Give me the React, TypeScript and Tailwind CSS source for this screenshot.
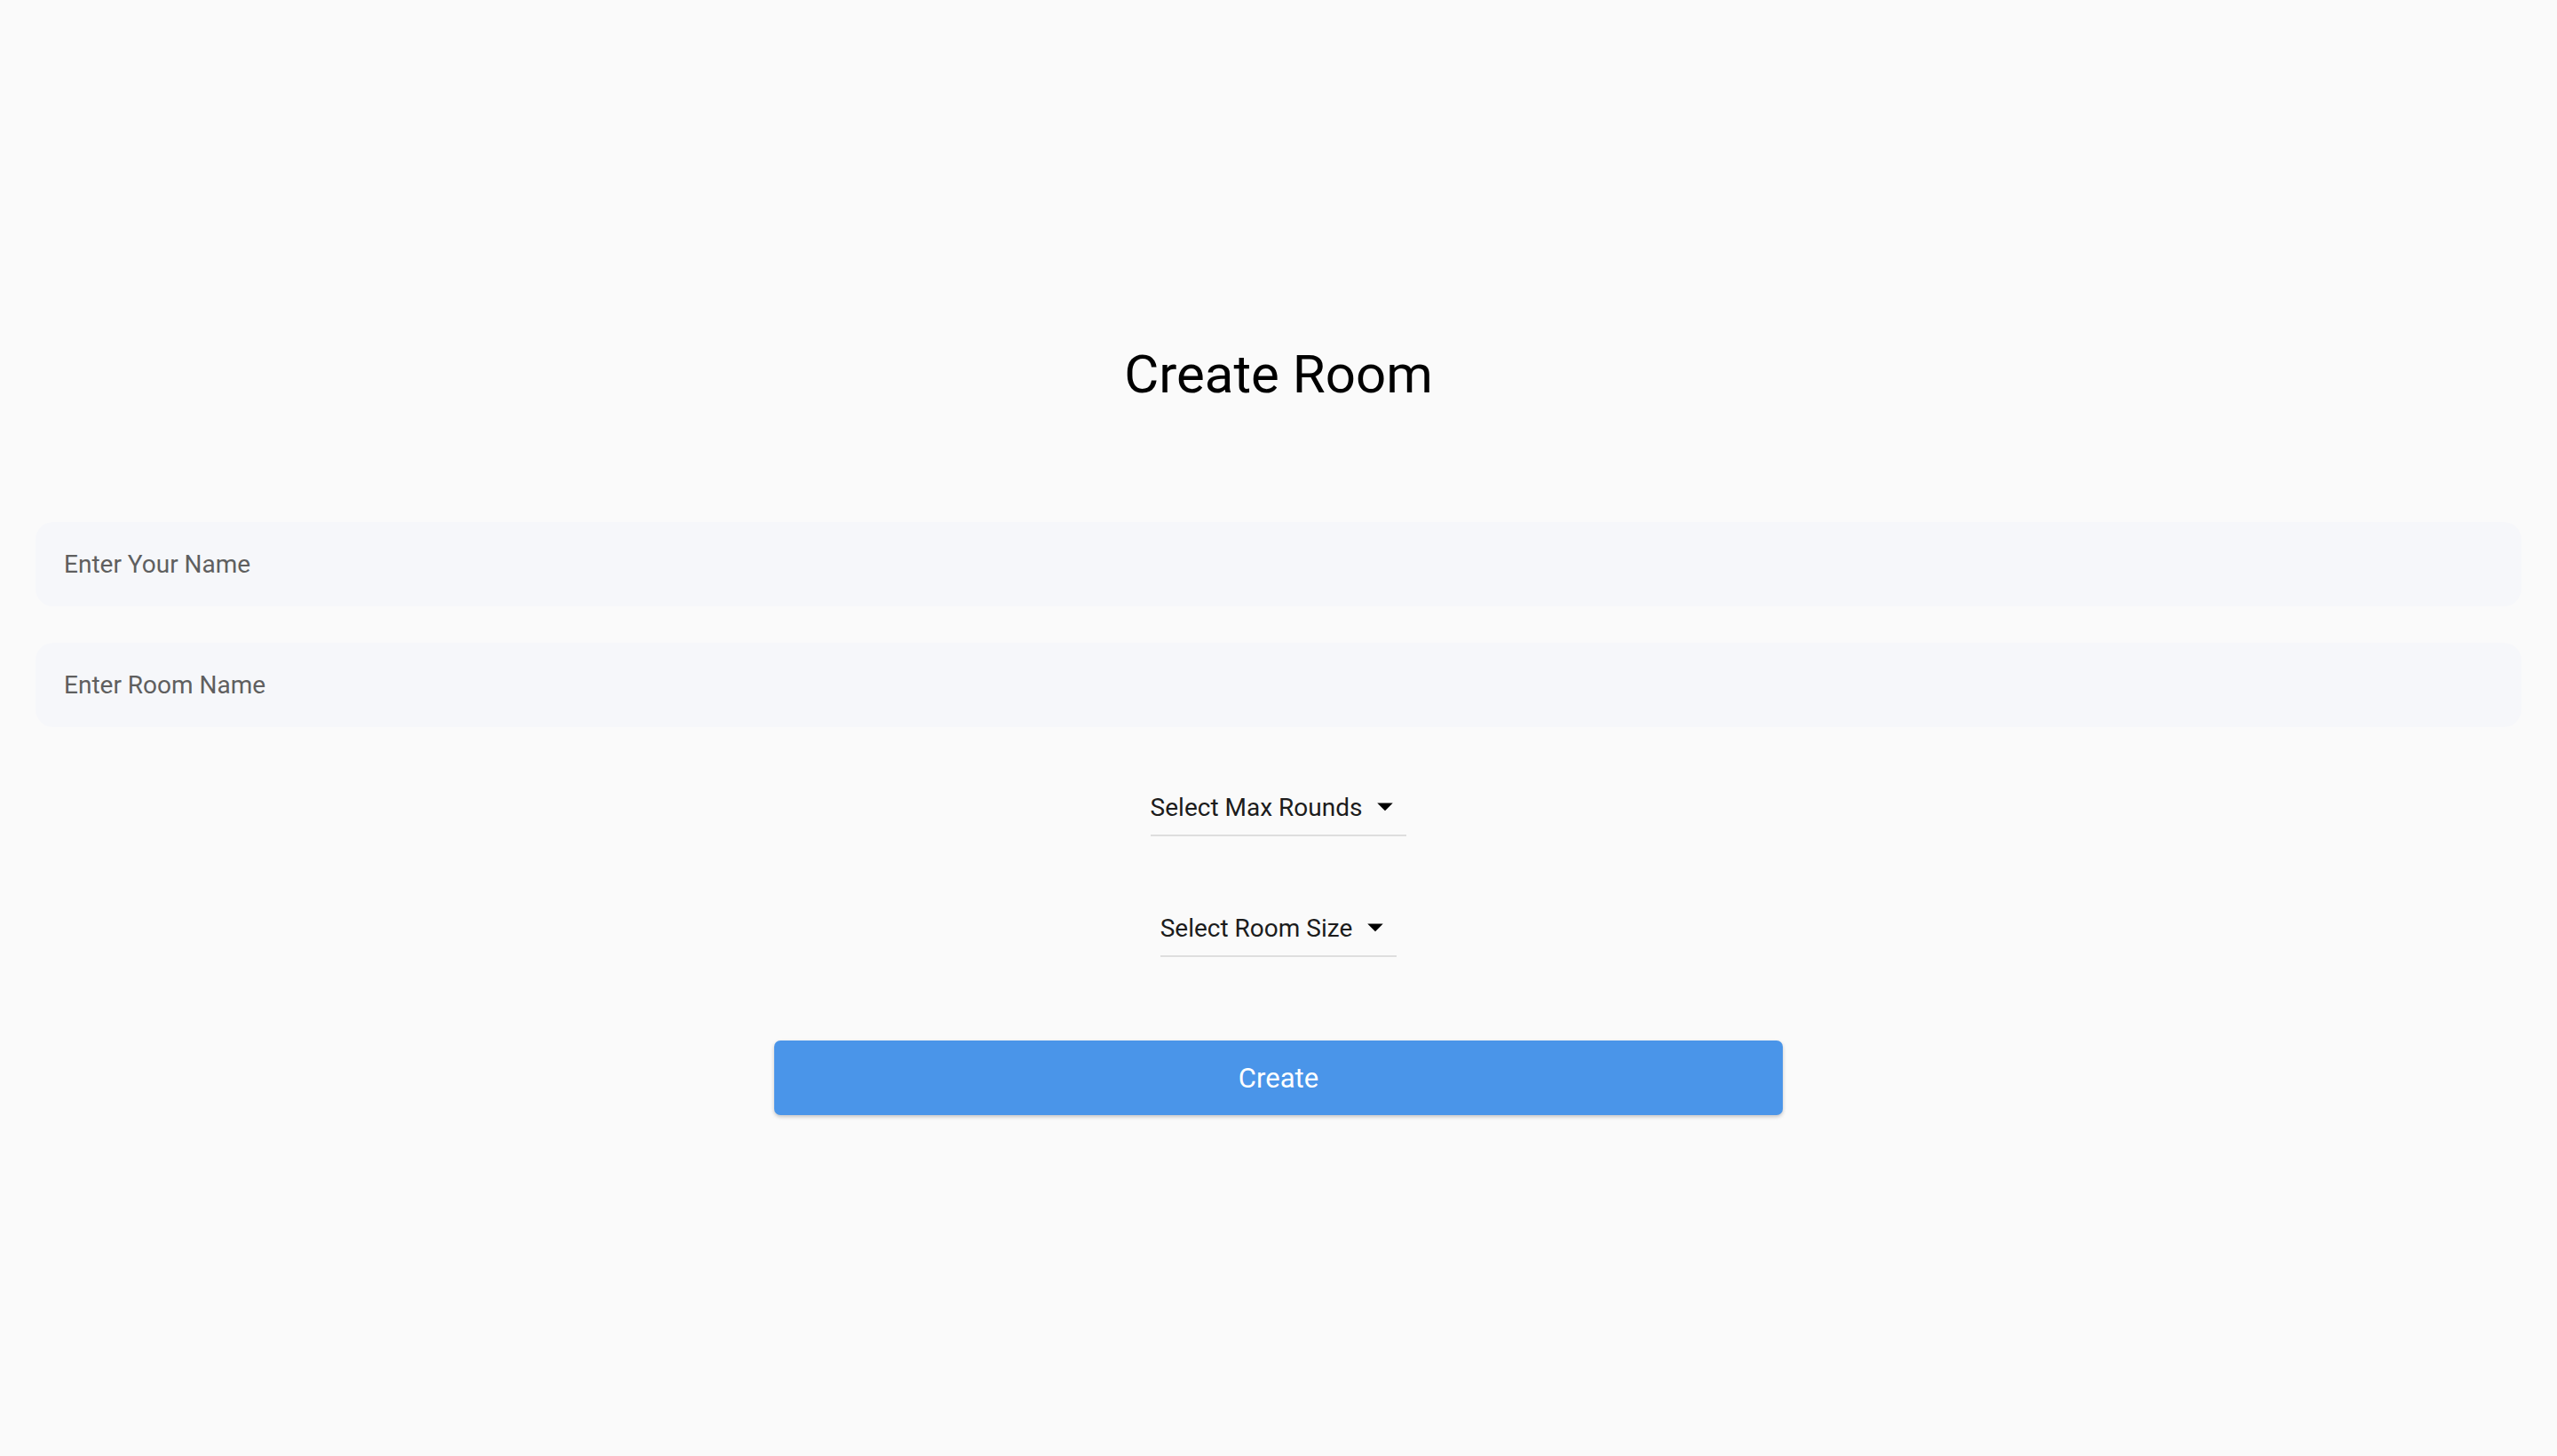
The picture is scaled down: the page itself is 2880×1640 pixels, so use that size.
import React from "react";

const ArrowDrop = () => (
  <svg viewBox="0 0 24 24" className="w-[42px] h-[42px] ml-[5px]" fill="#000">
    <path d="M7 10l5 5 5-5z" />
  </svg>
);

const Dropdown = ({ label, className }: { label: string; className: string }) => (
  <div className={`flex flex-col items-center ${className}`}>
    <div className="flex items-center pb-[11px] pr-[3px] border-b-2 border-[#dedede]">
      <span className="pt-[3px] text-[28px] leading-[28px] text-[#1c1c1c]">{label}</span>
      <ArrowDrop />
    </div>
  </div>
);

const App = () => {
  return (
    <div className="min-h-screen bg-[#fafafa] font-['Roboto',sans-serif] flex flex-col items-center px-[40px]">
      <h1 className="mt-[392px] text-[60px] leading-[60px] text-black font-normal">
        Create Room
      </h1>
      <input
        placeholder="Enter Your Name"
        className="mt-[136px] w-full h-[95px] rounded-[20px] bg-[#f6f7fa] px-[32px] text-[28px] text-[#1c1c1c] placeholder:text-[#5f5f5f] outline-none"
      />
      <input
        placeholder="Enter Room Name"
        className="mt-[41px] w-full h-[95px] rounded-[20px] bg-[#f6f7fa] px-[32px] text-[28px] text-[#1c1c1c] placeholder:text-[#5f5f5f] outline-none"
      />
      <Dropdown label="Select Max Rounds" className="mt-[68px]" />
      <Dropdown label="Select Room Size" className="mt-[81px]" />
      <button className="mt-[94px] w-[1136px] h-[84px] pt-[3px] rounded-[7px] bg-[#4a95e9] text-white text-[31px] shadow-[0_2px_4px_rgba(0,0,0,0.22)]">
        Create
      </button>
    </div>
  );
};

export default App;
